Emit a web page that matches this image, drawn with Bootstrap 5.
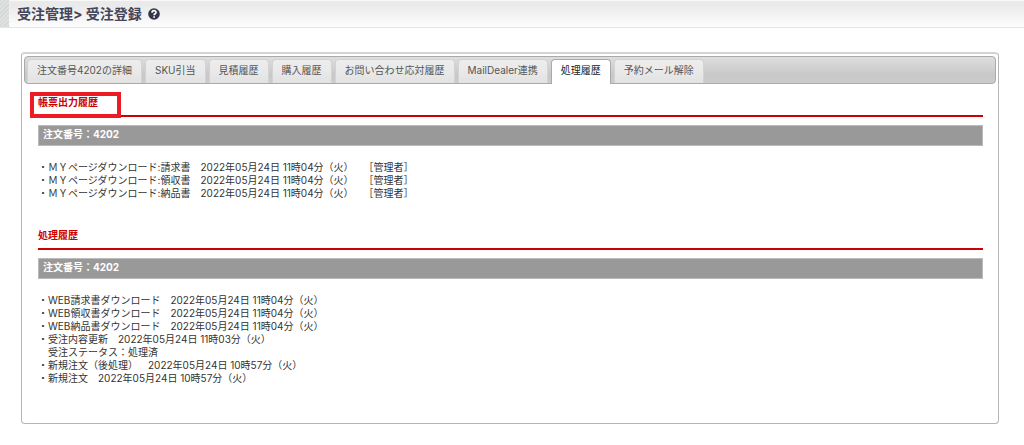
<!DOCTYPE html>
<html lang="ja">
<head>
<meta charset="utf-8">
<meta name="viewport" content="width=device-width, initial-scale=1">
<title>受注管理 &gt; 受注登録</title>
<link rel="stylesheet" href="https://cdn.jsdelivr.net/npm/bootstrap@5.3.0/dist/css/bootstrap.min.css">
<style>
body { font-family: Inter, "Noto Sans CJK JP", sans-serif; font-size: 10px; line-height: 13px; color: #333; background: #fff; text-spacing-trim: space-all; }
.page-head { height: 28px; border-bottom: 1px solid #e4e4e4; background: linear-gradient(#f8f8f8 1px, #eaeaea 1px, #eaeaea 20%, #fdfdfd); }
.stripe { width: 9px; background: repeating-linear-gradient(135deg, #d3d8d6 0 1px, #dfe1e0 1px 3px); }
.page-title { gap: 6px; padding-left: 8px; }
.page-title h1 { font-size: 14px; line-height: 20px; font-weight: 700; color: #43465a; }
.help-link { color: #34374c; }
.panel { margin: 24px 25px 20px 21px; padding: 2px; border: 1px solid #b5b5b5; border-top: 2px solid #d3d3d3; border-radius: 4px; }
.rail { gap: 3px; padding: 2px 2px 0; border: 1px solid #aaa; border-radius: 4px; background: linear-gradient(#dedede, #c8c8c8 70%, #ccc); --bs-nav-tabs-border-width: 0; }
.rail .nav-link { margin: 0; padding: 4px 9px 6px; border: 1px solid #d3d3d3; border-bottom: 0; border-radius: 4px 4px 0 0; font-size: 10px; line-height: 13px; color: #555; background: linear-gradient(#ededed, #e9e9e9 50%, #e2e2e2); }
.rail .nav-link.active { margin-bottom: -1px; padding-bottom: 7px; border-color: #aaa; color: #212121; background: #fff; }
.history { padding: 12px 13px 0 14px; }
.history h2 { margin: 0 0 8px; padding-bottom: 6px; border-bottom: 2px solid #c00; font-size: 10px; line-height: 13px; font-weight: 700; color: #c00; }
.marker { top: -4px; left: -8px; width: 91px; height: 26px; border: 4px solid #ed1c24; pointer-events: none; }
.order-bar { padding: 2px 4px 4px; border: 1px solid #bbb; background: #999; color: #fff; font-weight: 700; }
.log { margin: 15px 0 0; white-space: pre; }
.log-first { margin-bottom: 29px; }
.log-last { margin-bottom: 36px; }
</style>
</head>
<body>
<header class="page-head d-flex">
  <div class="stripe"></div>
  <div class="page-title d-flex align-items-center">
    <h1 class="m-0">受注管理&gt; 受注登録</h1>
    <a href="#" class="help-link d-block" aria-label="ヘルプ"><svg class="d-block" width="12" height="12" viewBox="0 0 12 12"><circle cx="6" cy="6" r="5.8" fill="currentColor"/><path d="M4 4.6C4.1 2.1 8 2.1 8 4.4C8 5.9 6.1 5.7 6.1 7.3M6.1 8.2V9.8" fill="none" stroke="#fff" stroke-width="1.7"/></svg></a>
  </div>
</header>
<main class="panel">
  <ul class="nav nav-tabs rail" role="tablist">
    <li class="nav-item"><button type="button" class="nav-link" role="tab">注文番号4202の詳細</button></li>
    <li class="nav-item"><button type="button" class="nav-link" role="tab">SKU引当</button></li>
    <li class="nav-item"><button type="button" class="nav-link" role="tab">見積履歴</button></li>
    <li class="nav-item"><button type="button" class="nav-link" role="tab">購入履歴</button></li>
    <li class="nav-item"><button type="button" class="nav-link" role="tab">お問い合わせ応対履歴</button></li>
    <li class="nav-item"><button type="button" class="nav-link" role="tab">MailDealer連携</button></li>
    <li class="nav-item"><button type="button" class="nav-link active" role="tab" aria-selected="true">処理履歴</button></li>
    <li class="nav-item"><button type="button" class="nav-link" role="tab">予約メール解除</button></li>
  </ul>
  <div class="history">
    <section>
      <h2 class="position-relative">帳票出力履歴<span class="marker position-absolute"></span></h2>
      <div class="order-bar">注文番号：4202</div>
      <ul class="log log-first list-unstyled"><li>・ＭＹページダウンロード:請求書　2022年05月24日 11時04分（火）　［管理者］</li><li>・ＭＹページダウンロード:領収書　2022年05月24日 11時04分（火）　［管理者］</li><li>・ＭＹページダウンロード:納品書　2022年05月24日 11時04分（火）　［管理者］</li></ul>
    </section>
    <section>
      <h2>処理履歴</h2>
      <div class="order-bar">注文番号：4202</div>
      <ul class="log log-last list-unstyled"><li>・WEB請求書ダウンロード　2022年05月24日 11時04分（火）</li><li>・WEB領収書ダウンロード　2022年05月24日 11時04分（火）</li><li>・WEB納品書ダウンロード　2022年05月24日 11時04分（火）</li><li>・受注内容更新　2022年05月24日 11時03分（火）
　受注ステータス：処理済</li><li>・新規注文（後処理）　2022年05月24日 10時57分（火）</li><li>・新規注文　2022年05月24日 10時57分（火）</li></ul>
    </section>
  </div>
</main>
<script src="https://cdn.jsdelivr.net/npm/bootstrap@5.3.0/dist/js/bootstrap.bundle.min.js"></script>
</body>
</html>
